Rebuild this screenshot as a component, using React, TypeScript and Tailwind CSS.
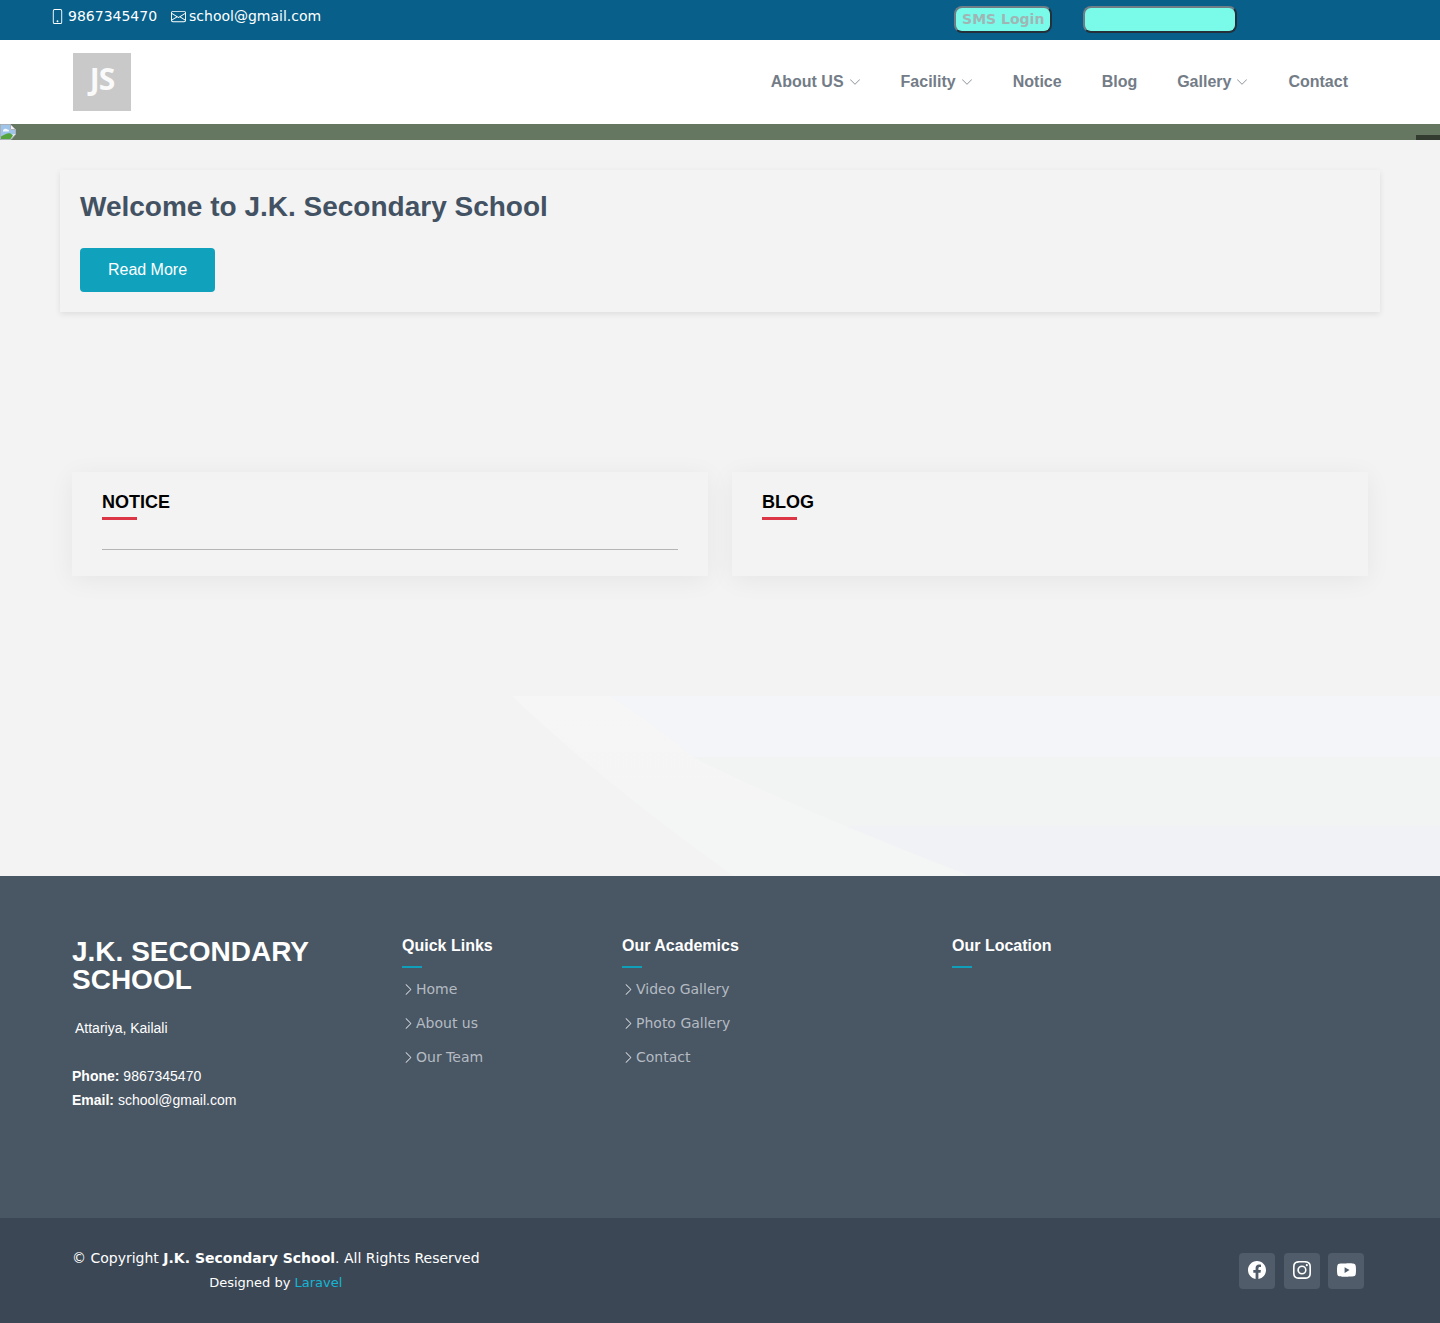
import { BsPhone, BsEnvelope, BsChevronDown, BsChevronRight, BsFacebook, BsInstagram, BsYoutube } from "react-icons/bs";

const sans = "font-['Liberation_Sans',Arial,sans-serif]";
const deja = "font-['DejaVu_Sans',Verdana,sans-serif]";

function BrokenImage() {
  return (
    <svg width="16" height="16" viewBox="0 0 16 16" className="block">
      <path d="M0.5 0.5H10.5L15.5 5.5V10.5L11 15.5H0.5Z" fill="#e8edf2" stroke="#aab0b8" />
      <path d="M1 1H10V6H15V10L1 13Z" fill="#9fc4ea" />
      <path d="M3 6.5C3.5 4.5 6.5 4 7.5 5.5C9 5.5 9.5 7 8.5 7.5H3Z" fill="#f4f8fc" />
      <path d="M1 15V12.5C5 10 8 8.5 10.5 9.5L13 11.5L10.5 15Z" fill="#55a53c" />
      <path d="M10.5 1V5.5H15" fill="#f4f4f4" stroke="#aab0b8" />
    </svg>
  );
}

function NavItem({ label, caret }: { label: string; caret?: boolean }) {
  return (
    <a className="flex items-center gap-[5px] text-base font-bold text-[#737c87]">
      {label}
      {caret && <BsChevronDown className="size-3 text-[#8b949b]" />}
    </a>
  );
}

function Card({ title, rule }: { title: string; rule?: boolean }) {
  return (
    <div className="h-[104px] bg-[#f3f3f3] px-[30px] pt-5 shadow-[0_4px_24px_rgba(0,0,0,0.06)]">
      <h3 className={`${sans} text-lg leading-5 font-bold text-black`}>{title}</h3>
      <div className="mt-[5px] h-[3px] w-[35px] bg-[#dc3545]" />
      {rule && <div className="mt-[29px] h-px bg-[#b5b5b5]" />}
    </div>
  );
}

function FooterLinks({ title, links }: { title: string; links: string[] }) {
  return (
    <div>
      <h4 className={`${sans} text-base leading-5 font-bold text-white`}>{title}</h4>
      <div className="mt-[10px] h-0.5 w-5 bg-[#109fba]" />
      <ul className={`${deja} mt-[10px] flex flex-col gap-3 text-sm leading-[22px] text-[#b4bbc2]`}>
        {links.map((l) => (
          <li key={l} className="flex items-center">
            <BsChevronRight className="mr-px size-[13px] text-[#d5d9dd]" />
            {l}
          </li>
        ))}
      </ul>
    </div>
  );
}

function Social({ children }: { children: React.ReactNode }) {
  return <a className="flex size-9 items-center justify-center rounded bg-[#505c69] pb-0.5 text-white">{children}</a>;
}

export default function App() {
  return (
    <div className={`${sans} min-h-[1323px] w-full bg-[#f3f3f3]`}>
      <div className={`${deja} flex h-10 items-start bg-[#075f8a] text-sm text-white`}>
        <div className="flex items-center pl-[50px] pt-[5px] leading-[22px]">
          <BsPhone className="size-[15px]" />
          <span className="ml-[3px]">9867345470</span>
          <BsEnvelope className="ml-[14px] size-[15px]" />
          <span className="ml-[3px]">school@gmail.com</span>
        </div>
        <div className="ml-[633px] flex gap-[31px] pt-1.5">
          <button className="h-[27px] w-[98px] rounded-lg border-2 border-t-[#6f7d86] border-l-[#6f7d86] border-r-[#26303a] border-b-[#26303a] bg-[#7afbea] pb-0.5 text-sm leading-5 font-bold text-[#a0b6b5]">
            SMS Login
          </button>
          <button className="h-[27px] w-[154px] rounded-lg border-2 border-t-[#6f7d86] border-l-[#6f7d86] border-r-[#26303a] border-b-[#26303a] bg-[#7afbea]" />
        </div>
      </div>

      <header className="flex h-[84px] items-start justify-between bg-white pl-[73px] pr-[92px]">
        <div className="mt-[13px] flex size-[58px] items-center justify-center bg-[#c9c9c9] pb-1.5 font-['Open_Sans',sans-serif] text-[30px] leading-none font-bold tracking-[-1px] text-[#fafafa]">
          JS
        </div>
        <nav className="flex h-full items-center gap-10">
          <NavItem label="About US" caret />
          <NavItem label="Facility" caret />
          <NavItem label="Notice" />
          <NavItem label="Blog" />
          <NavItem label="Gallery" caret />
          <NavItem label="Contact" />
        </nav>
      </header>

      <div className="relative h-4 bg-[#667761]">
        <BrokenImage />
        <div className="absolute bottom-0 right-0 h-[5px] w-6 bg-[#333a30]" />
      </div>

      <main className="relative h-[736px] overflow-hidden bg-[#f3f3f3] pt-[30px]">
        <svg className="absolute bottom-0 left-0" width="1440" height="180" viewBox="0 0 1440 180">
          <defs>
            <linearGradient id="w" x1="0" y1="0" x2="0" y2="1">
              <stop offset="0" stopColor="#f6f6f6" />
              <stop offset="0.58" stopColor="#f5f5f5" />
              <stop offset="0.58" stopColor="#f4f6f5" />
              <stop offset="1" stopColor="#f4f6f5" />
            </linearGradient>
            <linearGradient id="b" x1="0" y1="0" x2="0" y2="1">
              <stop offset="0" stopColor="#f4f5f8" />
              <stop offset="0.34" stopColor="#f4f5f8" />
              <stop offset="0.34" stopColor="#f2f4f3" />
              <stop offset="0.72" stopColor="#f2f4f3" />
              <stop offset="0.72" stopColor="#f1f2f5" />
              <stop offset="1" stopColor="#f1f2f5" />
            </linearGradient>
          </defs>
          <path d="M512 0H1000V180H734Q602 86 512 0Z" fill="url(#w)" />
          <path d="M609 0H1440V180H970Q790 110 694 62Q650 25 609 0Z" fill="url(#b)" />
        </svg>

        <div className="relative mx-[60px] h-[142px] bg-[#f3f3f3] px-5 pt-5 shadow-[0_2px_6px_rgba(0,0,0,0.09)]">
          <h1 className="text-[28px] leading-[34px] font-bold text-[#435263]">Welcome to J.K. Secondary School</h1>
          <a className="mt-6 flex h-11 w-[135px] items-center justify-center rounded-sm bg-[#10a2bd] text-base text-white">
            Read More
          </a>
        </div>

        <div className="relative mx-[72px] mt-40 grid grid-cols-2 gap-6">
          <Card title="NOTICE" rule />
          <Card title="BLOG" />
        </div>
      </main>

      <footer className="h-[342px] bg-[#495664] pl-[72px] pt-[60px]">
        <div className="grid grid-cols-[330px_220px_330px_1fr]">
          <div className="pt-0.5 text-white">
            <h2 className="w-[290px] text-[28px] leading-7 font-bold">J.K. SECONDARY SCHOOL</h2>
            <p className="mt-6 pl-[3px] text-sm leading-[20px]">Attariya, Kailali</p>
            <p className="mt-[26px] text-sm leading-6"><b>Phone:</b> 9867345470</p>
            <p className="text-sm leading-6"><b>Email:</b> school@gmail.com</p>
          </div>
          <FooterLinks title="Quick Links" links={["Home", "About us", "Our Team"]} />
          <FooterLinks title="Our Academics" links={["Video Gallery", "Photo Gallery", "Contact"]} />
          <div>
            <h4 className="text-base leading-5 font-bold text-white">Our Location</h4>
            <div className="mt-[10px] h-0.5 w-5 bg-[#109fba]" />
          </div>
        </div>
      </footer>

      <div className={`${deja} flex h-[105px] items-start justify-between bg-[#3b4754] pl-[72px] pr-[76px] text-white`}>
        <div className="pt-[29px] text-center">
          <p className="text-sm leading-[22px]">© Copyright <b>J.K. Secondary School</b>. All Rights Reserved</p>
          <p className="mt-1 text-[13px] leading-5">Designed by <a className="text-[#17b5d4]">Laravel</a></p>
        </div>
        <div className="flex pt-[35px]">
          <Social><BsFacebook className="size-[18px]" /></Social>
          <div className="ml-[9px]"><Social><BsInstagram className="size-[18px]" /></Social></div>
          <div className="ml-2"><Social><BsYoutube className="size-[19px]" /></Social></div>
        </div>
      </div>
    </div>
  );
}
